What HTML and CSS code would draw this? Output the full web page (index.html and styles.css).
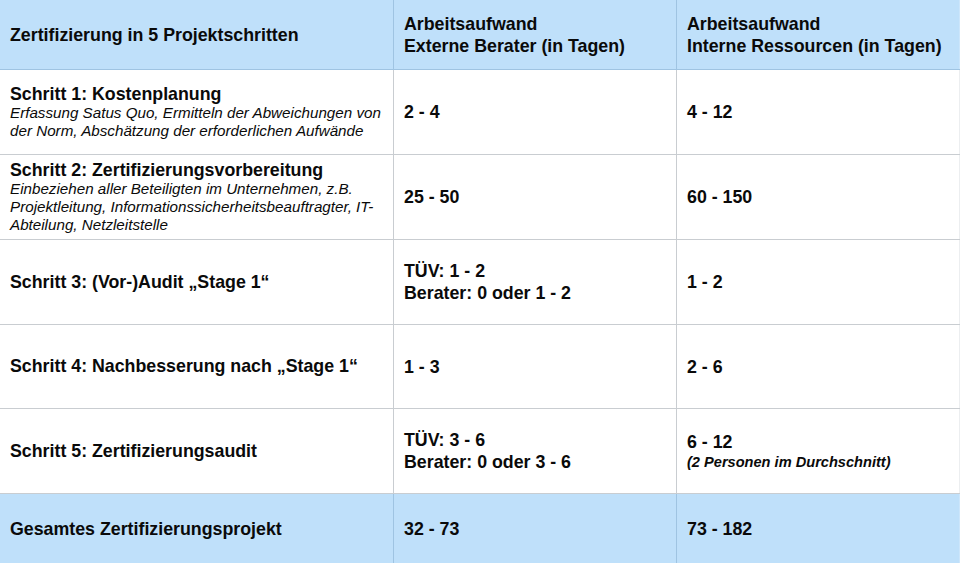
FILE: index.html
```html
<!DOCTYPE html>
<html lang="de">
<head>
<meta charset="utf-8">
<title>Zertifizierung in 5 Projektschritten</title>
<link rel="stylesheet" href="styles.css">
</head>
<body>
<div class="table">
  <div class="cell head">Zertifizierung in 5 Projektschritten</div>
  <div class="cell head">Arbeitsaufwand<br>Externe Berater (in Tagen)</div>
  <div class="cell head last">Arbeitsaufwand<br>Interne Ressourcen (in Tagen)</div>

  <div class="cell"><span class="title">Schritt 1: Kostenplanung</span><span class="desc">Erfassung Satus Quo, Ermitteln der Abweichungen von der Norm, Abschätzung der erforderlichen Aufwände</span></div>
  <div class="cell val">2 - 4</div>
  <div class="cell val last">4 - 12</div>

  <div class="cell"><span class="title">Schritt 2: Zertifizierungsvorbereitung</span><span class="desc">Einbeziehen aller Beteiligten im Unternehmen, z.B. Projektleitung, Informationssicherheitsbeauftragter, IT-Abteilung, Netzleitstelle</span></div>
  <div class="cell val">25 - 50</div>
  <div class="cell val last">60 - 150</div>

  <div class="cell"><span class="title">Schritt 3: (Vor-)Audit „Stage 1“</span></div>
  <div class="cell val">TÜV: 1 - 2<br>Berater: 0 oder 1 - 2</div>
  <div class="cell val last">1 - 2</div>

  <div class="cell"><span class="title">Schritt 4: Nachbesserung nach „Stage 1“</span></div>
  <div class="cell val">1 - 3</div>
  <div class="cell val last">2 - 6</div>

  <div class="cell"><span class="title">Schritt 5: Zertifizierungsaudit</span></div>
  <div class="cell val">TÜV: 3 - 6<br>Berater: 0 oder 3 - 6</div>
  <div class="cell val last"><span>6 - 12</span><span class="note">(2 Personen im Durchschnitt)</span></div>

  <div class="cell foot">Gesamtes Zertifizierungsprojekt</div>
  <div class="cell foot">32 - 73</div>
  <div class="cell foot last">73 - 182</div>
</div>
</body>
</html>
```

FILE: styles.css
```css
html, body {
  margin: 0;
  padding: 0;
  background: #bfe0fa;
}

body {
  font-family: "Liberation Sans", Arial, sans-serif;
  color: #0a0a0a;
  width: 960px;
  height: 563px;
  overflow: hidden;
}

.table {
  display: grid;
  grid-template-columns: 394px 283px 1fr;
  grid-template-rows: 70px 85px 85px 85px 84px 85px 69px;
  width: 960px;
  height: 563px;
}

.cell {
  display: flex;
  flex-direction: column;
  justify-content: center;
  padding: 0 10px;
  background: #ffffff;
  border-right: 1px solid #c9cdd1;
  border-bottom: 1px solid #c9cdd1;
  font-size: 17.8px;
  font-weight: bold;
  line-height: 22px;
}

.cell.last {
  border-right: none;
  box-shadow: inset -10px 0 0 -9px #eceef0;
}

.head,
.foot {
  background: #bfe0fa;
  border-right-color: #9fc4e2;
  border-bottom-color: #9fc4e2;
}

.head.last,
.foot.last {
  box-shadow: inset -10px 0 0 -9px #cde6fb;
}

.foot {
  border-bottom: none;
}

.title {
  font-size: 17.8px;
  font-weight: bold;
  line-height: 19px;
}

.desc {
  font-size: 15.2px;
  font-style: italic;
  font-weight: normal;
  line-height: 18px;
}

.val {
  font-size: 17.8px;
  line-height: 22px;
}

.note {
  font-size: 14.6px;
  font-style: italic;
  font-weight: bold;
  line-height: 19px;
}
```
